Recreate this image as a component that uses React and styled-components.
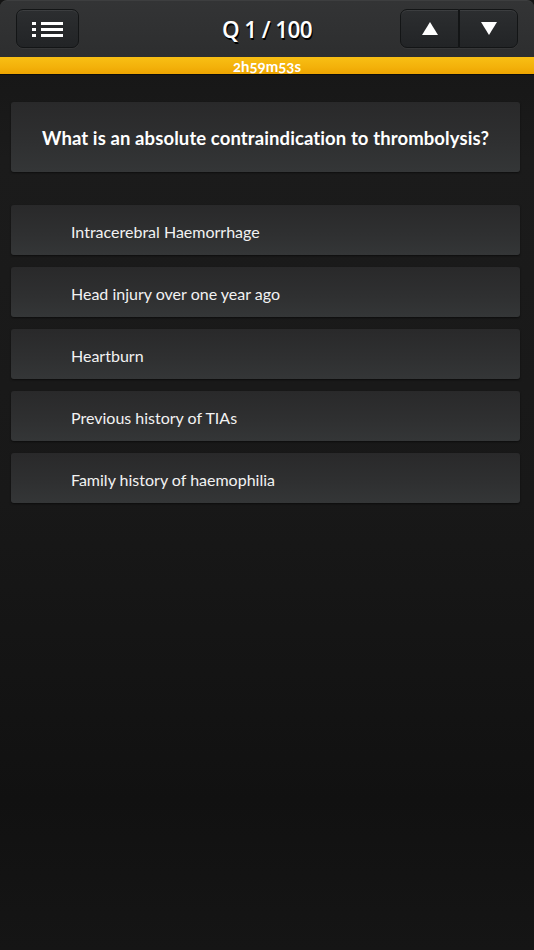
import styled, { createGlobalStyle } from "styled-components";

const GlobalStyle = createGlobalStyle`
  html, body {
    margin: 0;
    padding: 0;
    background: #161616;
  }
  * {
    box-sizing: border-box;
  }
`;

const Screen = styled.div`
  width: 534px;
  height: 950px;
  display: flex;
  flex-direction: column;
  font-family: Lato, "Open Sans", sans-serif;
  background: linear-gradient(
    180deg,
    #141414 0px,
    #1b1b1b 160px,
    #181818 500px,
    #111111 800px,
    #151515 950px
  );
  overflow: hidden;
`;

const TopBar = styled.div`
  height: 57px;
  display: flex;
  align-items: center;
  justify-content: space-between;
  padding: 0 16px;
  background: linear-gradient(180deg, #333435 0%, #2d2e2f 100%);
  border-radius: 7px 7px 0 0;
  border-top: 1px solid #3d3e3f;
  position: relative;
`;

const BarButton = styled.div`
  height: 39px;
  display: flex;
  align-items: center;
  justify-content: center;
  background: linear-gradient(180deg, #2c2e30 0%, #222426 100%);
  border: 1px solid #131516;
  box-shadow: inset 0 1px 0 rgba(255, 255, 255, 0.08), 0 1px 0 rgba(255, 255, 255, 0.04);
  border-radius: ${(p) => p.$radius || "7px"};
  width: ${(p) => p.$width}px;
  margin-top: -1px;
`;

const ArrowGroup = styled.div`
  display: flex;
`;

const Title = styled.div`
  position: absolute;
  left: 0;
  right: 0;
  top: 0;
  height: 56px;
  display: flex;
  align-items: center;
  justify-content: center;
  color: #ffffff;
  font-family: "Open Sans", sans-serif;
  font-size: 22.5px;
  font-weight: 600;
  letter-spacing: -0.6px;
  text-shadow: 1px 2px 0 #000;
  pointer-events: none;
`;

const TimerBar = styled.div`
  height: 18px;
  display: flex;
  align-items: center;
  justify-content: center;
  padding-top: 2px;
  background: linear-gradient(180deg, #f8bf14 0%, #f3b10a 60%, #eda400 100%);
  border-bottom: 1px solid #0c0c0c;
  color: #ffffff;
  font-size: 15px;
  font-weight: 700;
  line-height: 1;
  font-variant-numeric: oldstyle-nums;
`;

const Content = styled.div`
  display: flex;
  flex-direction: column;
  padding: 27px 14px 0 11px;
`;

const Card = styled.div`
  height: ${(p) => p.$height}px;
  display: flex;
  align-items: center;
  justify-content: ${(p) => (p.$center ? "center" : "flex-start")};
  padding-left: ${(p) => (p.$center ? 0 : 60)}px;
  padding-top: 2px;
  background: linear-gradient(180deg, #29292a 0%, #2f3031 60%, #343637 100%);
  border-radius: 3px;
  box-shadow: 0 1px 2px rgba(0, 0, 0, 0.5);
  color: #f2f2f2;
`;

const Question = styled(Card)`
  font-size: 18.5px;
  font-weight: 700;
  letter-spacing: 0.1px;
  color: #ffffff;
  margin-bottom: 33px;
`;

const Options = styled.div`
  display: flex;
  flex-direction: column;
  gap: 12px;
`;

const Option = styled(Card)`
  font-size: 16px;
  font-weight: 400;
  letter-spacing: 0;
`;

const MenuIcon = () => (
  <svg width="32" height="16" viewBox="0 0 32 16">
    {[1, 7, 13].map((y) => (
      <g key={y} fill="#ffffff">
        <rect x="0" y={y} width="4" height="3" />
        <rect x="9" y={y} width="22" height="3" />
      </g>
    ))}
  </svg>
);

const Tri = ({ up }) => (
  <svg width="18" height="15" viewBox="0 0 18 15">
    <polygon points={up ? "9,1 17,14 1,14" : "1,1 17,1 9,14"} fill="#ffffff" />
  </svg>
);

const answers = [
  "Intracerebral Haemorrhage",
  "Head injury over one year ago",
  "Heartburn",
  "Previous history of TIAs",
  "Family history of haemophilia",
];

export default function App() {
  return (
    <>
      <GlobalStyle />
      <Screen>
        <TopBar>
          <BarButton $width={63}>
            <MenuIcon />
          </BarButton>
          <Title>Q 1 / 100</Title>
          <ArrowGroup>
            <BarButton $width={59} $radius="7px 0 0 7px">
              <Tri up />
            </BarButton>
            <BarButton $width={59} $radius="0 7px 7px 0">
              <Tri />
            </BarButton>
          </ArrowGroup>
        </TopBar>
        <TimerBar>2h59m53s</TimerBar>
        <Content>
          <Question $height={70} $center>
            What is an absolute contraindication to thrombolysis?
          </Question>
          <Options>
            {answers.map((a) => (
              <Option key={a} $height={50}>
                {a}
              </Option>
            ))}
          </Options>
        </Content>
      </Screen>
    </>
  );
}
